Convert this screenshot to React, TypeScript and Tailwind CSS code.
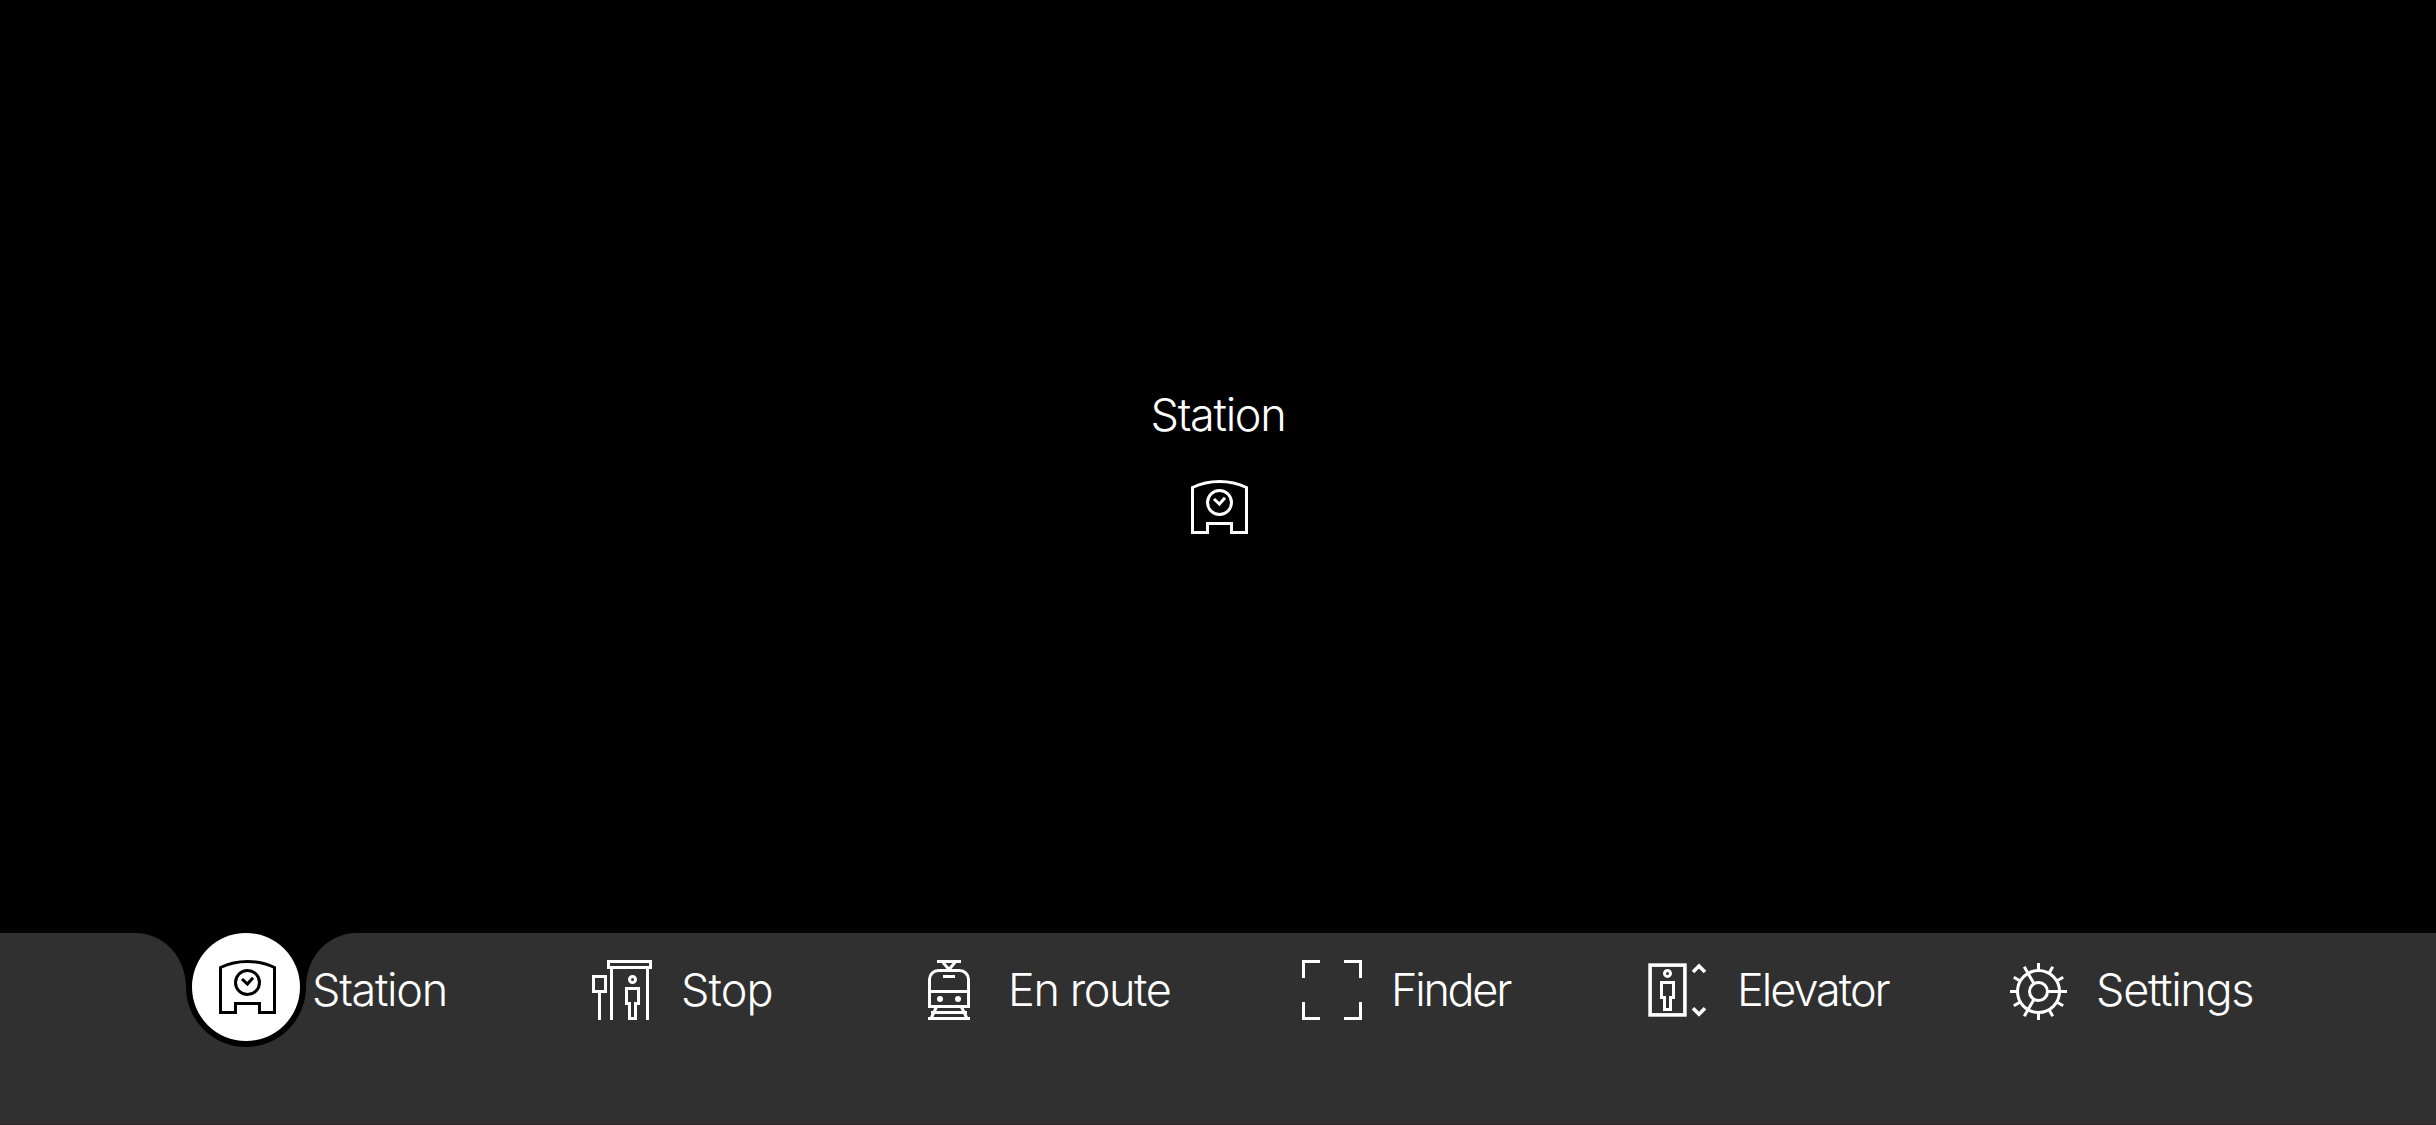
import type { ReactNode } from 'react';

function Glyph({ children, className = '' }: { children: ReactNode; className?: string }) {
  return (
    <svg
      viewBox="0 0 72 72"
      className={`size-[72px] shrink-0 ${className}`}
      fill="none"
      stroke="currentColor"
      strokeWidth={3}
      aria-hidden="true"
    >
      {children}
    </svg>
  );
}

function StationIcon() {
  return (
    <Glyph>
      <path d="M10.5 61.5V16.5C27 8.5 48 8.5 64.5 16.5V61.5H49.5V52.5H25.5V61.5Z" />
      <circle cx="37.5" cy="31.5" r="12" />
      <path d="M32 28L37.4 33L43 26.7" />
    </Glyph>
  );
}

function StopIcon() {
  return (
    <Glyph>
      <path d="M22.5 7.5H64.5V13.5H22.5ZM25.5 15V66M61.5 15V66M7.5 22.5H19.5V37.5H7.5ZM13.5 39V66" />
      <circle cx="46.5" cy="25.5" r="3" />
      <path d="M40.5 34.5H52.5V49.5H49.5V64.5H43.5V49.5H40.5Z" />
    </Glyph>
  );
}

function TrainIcon() {
  return (
    <Glyph>
      <path d="M24 7.5H48M30 8.5L36 15.5L42 8.5M30 22.5H42M16.5 37.5H55.5" />
      <path d="M16.5 52.5V25.5A9 9 0 0 1 25.5 16.5H46.5A9 9 0 0 1 55.5 25.5V52.5Z" />
      <path d="M18 58.5H54M15 64.5H57M23.5 53L18 64.5M48.5 53L54 64.5" />
      <circle cx="27" cy="45" r="3" fill="currentColor" stroke="none" />
      <circle cx="45" cy="45" r="3" fill="currentColor" stroke="none" />
    </Glyph>
  );
}

function FinderIcon() {
  return (
    <Glyph>
      <path d="M7.5 24V7.5H24M48 7.5H64.5V24M64.5 48V64.5H48M24 64.5H7.5V48" />
    </Glyph>
  );
}

function ElevatorIcon() {
  return (
    <Glyph>
      <rect x="8.1" y="11.1" width="34.8" height="49.8" strokeWidth="3.6" />
      <circle cx="25.5" cy="19.4" r="3" />
      <path d="M19.5 28.5H31.5V43.5H28.5V55.5H22.5V43.5H19.5Z" />
      <path d="M51 18L57 12L63 18M51 54.3L57 60.3L63 54.3" strokeWidth="3.6" />
    </Glyph>
  );
}

const teeth = Array.from({ length: 12 }, (_, i) => i * 30);

function SettingsIcon() {
  return (
    <Glyph>
      <circle cx="34.5" cy="37.5" r="21" />
      <circle cx="34.5" cy="37.5" r="9" />
      {teeth.map((a) => (
        <path
          key={a}
          d={a % 120 === 0 ? 'M44 37.5H63' : 'M56 37.5H63'}
          transform={`rotate(${a} 34.5 37.5)`}
        />
      ))}
    </Glyph>
  );
}

const label =
  "font-['Inter','Liberation_Sans',sans-serif] text-[45px] leading-[54px] font-[330] whitespace-nowrap";

const tabs = [
  { name: 'Stop', icon: <StopIcon />, spacing: 'tracking-[-0.9px]', gap: 'gap-[23px]' },
  { name: 'En route', icon: <TrainIcon />, spacing: 'tracking-[-1.4px]', gap: 'gap-[23px]' },
  { name: 'Finder', icon: <FinderIcon />, spacing: 'tracking-[-2.3px]', gap: 'gap-[23px]' },
  { name: 'Elevator', icon: <ElevatorIcon />, spacing: 'tracking-[-2px]', gap: 'gap-[23px]' },
  { name: 'Settings', icon: <SettingsIcon />, spacing: 'tracking-[-1.3px]', gap: 'gap-[20px]' },
];

export default function App() {
  return (
    <div className="flex h-[1125px] w-[2436px] flex-col overflow-hidden bg-black text-white">
      <main className="flex h-[933px] flex-col items-center pt-[388px]">
        <h1 className={`${label} tracking-[-1.3px]`}>Station</h1>
        <div className="mt-[29px]">
          <StationIcon />
        </div>
      </main>

      <nav className="relative h-[192px] border-b border-[#30282e]">
        <svg
          viewBox="0 0 2436 191"
          className="absolute inset-0 h-[191px] w-[2436px] text-[#303030]"
          fill="currentColor"
          aria-hidden="true"
        >
          <path d="M0 0H135C164 0 186 24 186 54A60 60 0 0 0 306 54C306 24 328 0 357 0H2436V191H0Z" />
        </svg>
        <div className="relative grid grid-cols-[394px_327px_383px_346px_362px_auto] pl-[192px]">
          <button className="flex h-[108px] items-center gap-3 text-left">
            <span className="flex size-[108px] items-center justify-center rounded-full bg-white text-black">
              <StationIcon />
            </span>
            <span className={`${label} pt-[6px] tracking-[-1.3px]`}>Station</span>
          </button>
          {tabs.map((tab) => (
            <button key={tab.name} className={`flex h-[114px] items-center text-left ${tab.gap}`}>
              {tab.icon}
              <span className={`${label} ${tab.spacing}`}>{tab.name}</span>
            </button>
          ))}
        </div>
      </nav>
    </div>
  );
}
